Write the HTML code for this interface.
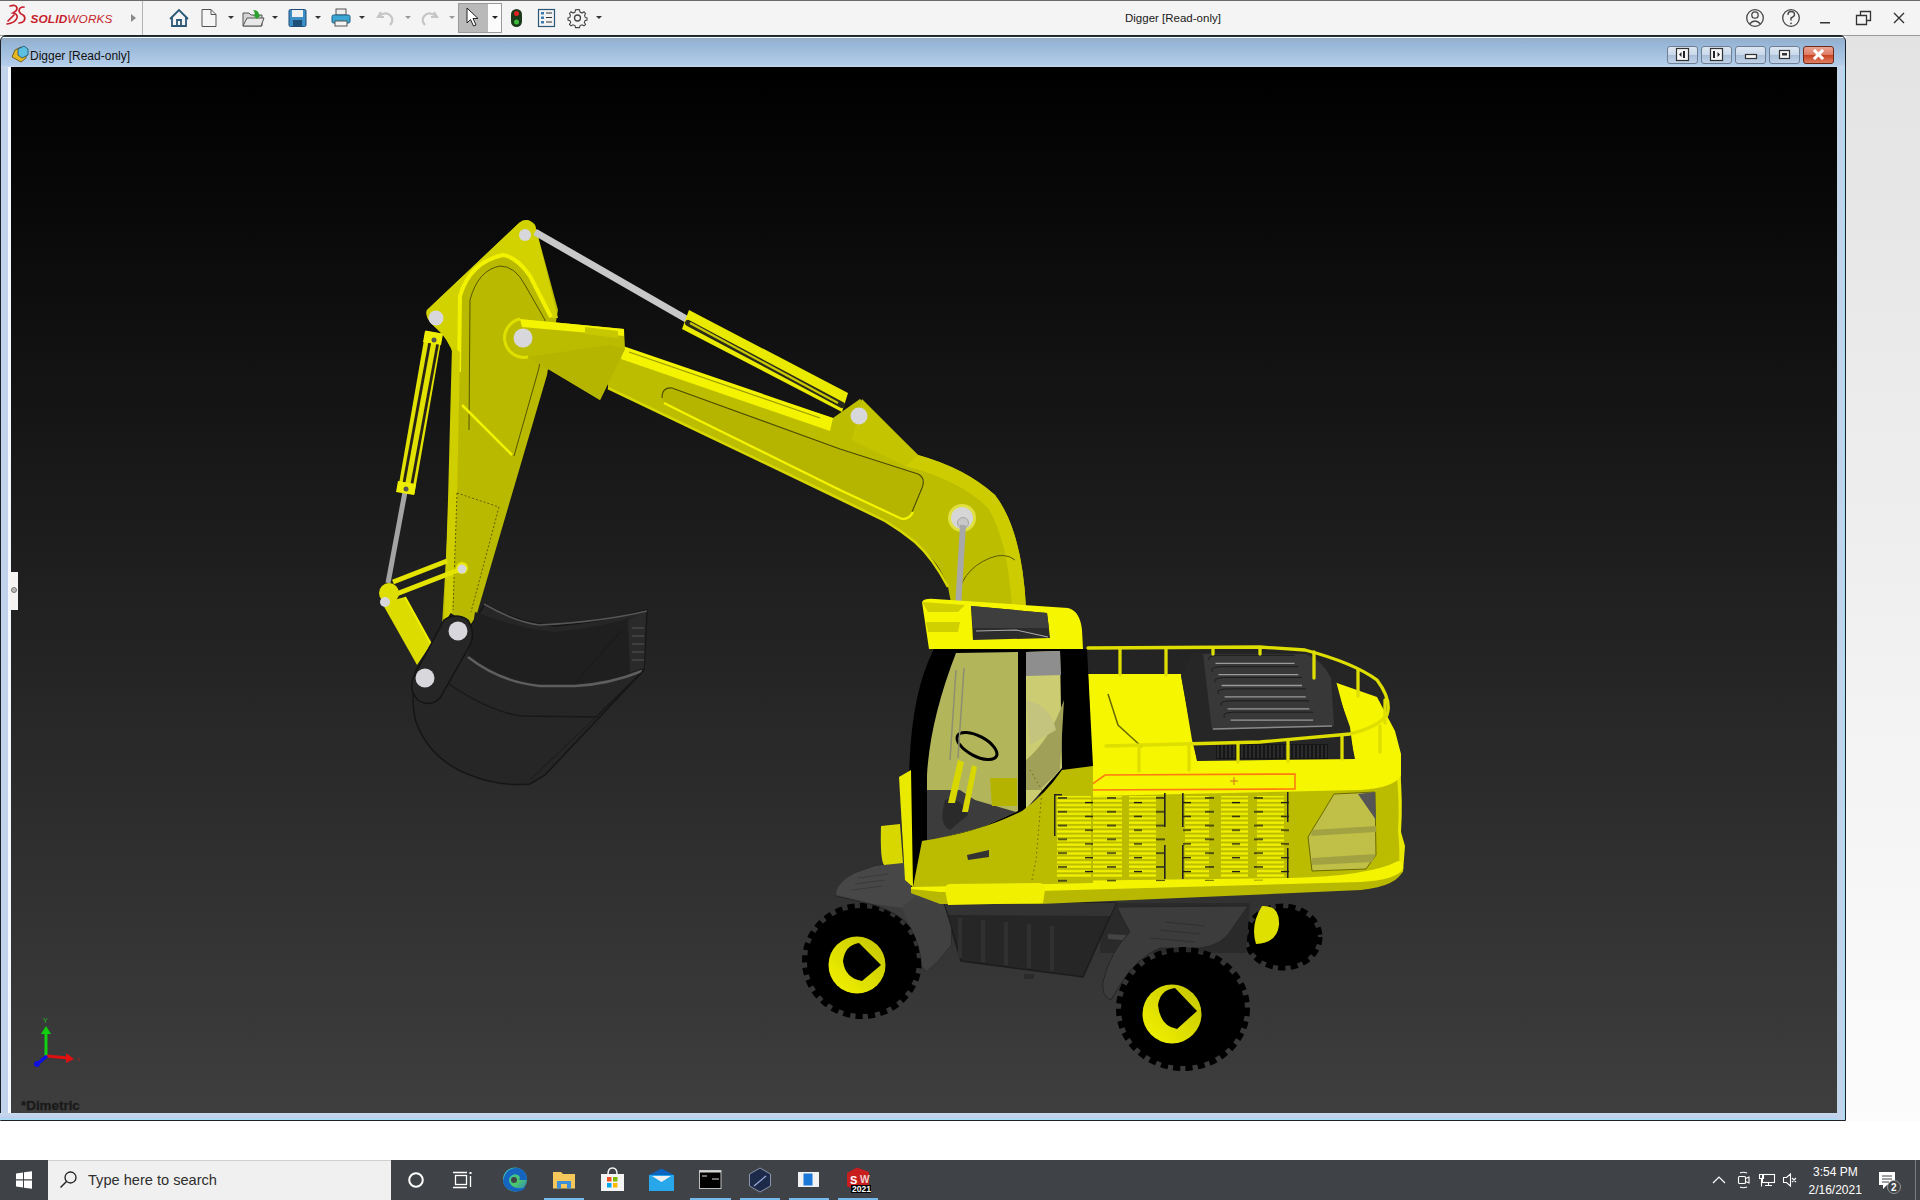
<!DOCTYPE html>
<html><head><meta charset="utf-8">
<style>
*{margin:0;padding:0;box-sizing:border-box}
html,body{width:1920px;height:1200px;overflow:hidden;background:#fff;font-family:"Liberation Sans",sans-serif}
#tb{position:absolute;left:0;top:0;width:1920px;height:36px;background:#f4f4f4;border-bottom:1px solid #9a9a9a}
#right{position:absolute;left:1846px;top:36px;width:74px;height:1085px;background:linear-gradient(#e3e3e3,#fcfcfc)}
#below{position:absolute;left:0;top:1121px;width:1920px;height:39px;background:#fff}
#mdi{position:absolute;left:0;top:35px;width:1846px;height:1086px;background:linear-gradient(#2d3238 0,#2d3238 1px,#eefaff 1px,#eefaff 2px,#97adc6 2px,#96b5d6 7px,#b3cde9 29px,#c8d8ee 31px,#c2d4ec 32px,#c2d4ec);border:1px solid #1d2228;border-radius:6px 6px 0 0}
#vp{position:absolute;left:11px;top:67px;width:1826px;height:1046px;background:linear-gradient(#000 0%,#202020 50%,#3e3e3e 100%)}
#title{position:absolute;left:30px;top:49px;font-size:12px;color:#111}
#task{position:absolute;left:0;top:1160px;width:1920px;height:40px;background:#3f4246}
#search{position:absolute;left:48px;top:1160px;width:343px;height:40px;background:#f0f0f0;border-top:1px solid #d0d0d0}
#search span{position:absolute;left:40px;top:11px;font-size:14.6px;color:#2e2e2e}
#svg{position:absolute;left:0;top:0}
</style></head><body>
<div id="tb"></div>
<svg id="tbsvg" style="position:absolute;left:0;top:0" width="1920" height="36" viewBox="0 0 1920 36">
<rect x="0" y="0" width="1920" height="1" fill="#6a6a6a"/>
<!-- logo 3DS -->
<g fill="none" stroke="#c61f2b" stroke-width="1.7" stroke-linecap="round">
<path d="M10,6 Q16,4 17,8 Q17,11 13,13 Q18,14 17,18 Q15,23 7,24"/>
<path d="M14,15 L8,21"/>
<path d="M24,7 Q19,7 19,11 Q20,14 23,15 Q26,17 24,21 Q22,23 19,23"/>
</g>
<text x="30.5" y="22.5" font-family="Liberation Sans" font-size="11.8" font-style="italic" fill="#c61f2b" letter-spacing="0.15"><tspan font-weight="bold">SOLID</tspan><tspan>WORKS</tspan></text>
<path d="M131,14 L136,18 L131,22 Z" fill="#8a8a8a"/>
<rect x="142" y="1" width="1" height="34" fill="#b4b4b4"/>
<!-- home -->
<g fill="none" stroke="#2b5877" stroke-width="1.8">
<path d="M170,19 L179,10 L188,19"/><path d="M172,17 L172,26 L186,26 L186,17"/><path d="M177,26 L177,20 L181,20 L181,26"/>
</g>
<!-- new doc -->
<path d="M202,9.5 L211,9.5 L216,14.5 L216,26.5 L202,26.5 Z" fill="#f6f6f6" stroke="#555" stroke-width="1"/>
<path d="M211,9.5 L211,14.5 L216,14.5" fill="none" stroke="#555"/>
<path d="M228,16 L234,16 L231,19 Z" fill="#333"/>
<!-- open -->
<path d="M243,13 L249,13 L251,15 L262,15 L262,26 L243,26 Z" fill="#d5d5d5" stroke="#555"/>
<path d="M247,18 L264,18 L261,26 L243,26 Z" fill="#e8e8e8" stroke="#555"/>
<path d="M253,10 Q259,10 259,15 L261,15 L257,19 L253,15 L255,15 Q255,12 253,10 Z" fill="#2da12d"/>
<path d="M272,16 L278,16 L275,19 Z" fill="#333"/>
<!-- save -->
<rect x="289" y="9.5" width="17" height="17" rx="1.5" fill="#3b8ec6" stroke="#1f4f78"/>
<rect x="292" y="10" width="11" height="7" fill="#f0f0f0"/>
<rect x="293" y="20" width="9" height="6" fill="#1f4f78"/>
<path d="M315,16 L321,16 L318,19 Z" fill="#333"/>
<!-- print -->
<rect x="336" y="9" width="10" height="6" fill="#eee" stroke="#555"/>
<rect x="332" y="15" width="18" height="8" rx="1.5" fill="#3aa6d3" stroke="#1f5f86"/>
<rect x="335" y="21" width="12" height="5" fill="#f4f4f4" stroke="#555"/>
<path d="M359,16 L365,16 L362,19 Z" fill="#333"/>
<!-- undo/redo -->
<path d="M381,12 L378,17 L384,17 M379,16 Q388,10 392,18 Q393,22 390,25" fill="none" stroke="#c6c6c6" stroke-width="2.2"/>
<path d="M405,16 L411,16 L408,19 Z" fill="#999"/>
<path d="M434,12 L437,17 L431,17 M436,16 Q427,10 423,18 Q422,22 425,25" fill="none" stroke="#c6c6c6" stroke-width="2.2"/>
<path d="M449,16 L455,16 L452,19 Z" fill="#999"/>
<!-- select -->
<rect x="458.5" y="3.5" width="43" height="29" fill="#fbfbfb" stroke="#9a9a9a"/>
<rect x="459" y="4" width="29" height="28" fill="#b9b9b9"/>
<path d="M467,8 L467,23 L470.5,19.5 L473.5,26 L476,25 L473,18.5 L478,18.5 Z" fill="#fff" stroke="#222" stroke-width="1"/>
<path d="M492,16 L498,16 L495,19 Z" fill="#222"/>
<!-- traffic light -->
<rect x="511" y="9" width="11" height="18" rx="5.5" fill="#1a3a1a"/>
<circle cx="516.5" cy="13.5" r="2.5" fill="#e02020"/>
<circle cx="516.5" cy="22" r="2.5" fill="#3bbd3b"/>
<!-- list -->
<rect x="538.5" y="9.5" width="16" height="17" fill="#f3f3f3" stroke="#2b5877" stroke-width="1.2"/>
<g fill="#3b7bb0"><rect x="541" y="12" width="3" height="2.5"/><rect x="541" y="16.5" width="3" height="2.5"/><rect x="541" y="21" width="3" height="2.5"/></g>
<g stroke="#333" stroke-width="1"><path d="M546,13 L552,13 M546,17.5 L552,17.5 M546,22 L552,22"/></g>
<!-- gear -->
<circle cx="577.5" cy="18" r="3" fill="none" stroke="#444" stroke-width="1.3"/>
<path d="M577.5,9.5 L579.5,9.8 L580,12 L582,13 L584,11.8 L585.5,13.5 L584.5,15.6 L585.3,17.4 L587,18 L587,20 L585,20.6 L584.3,22.4 L585.5,24.3 L584,25.8 L582,24.8 L580,25.6 L579.5,27.6 L575.5,27.6 L575,25.6 L573,24.8 L571,25.8 L569.5,24.3 L570.7,22.4 L570,20.6 L568,20 L568,18 L569.8,17.4 L570.5,15.6 L569.5,13.5 L571,11.8 L573,13 L575,12 L575.5,9.8 Z" fill="none" stroke="#444" stroke-width="1.1"/>
<path d="M596,16 L602,16 L599,19 Z" fill="#333"/>
<!-- right icons -->
<circle cx="1755" cy="18" r="8.3" fill="none" stroke="#444" stroke-width="1.3"/>
<circle cx="1755" cy="15" r="3.2" fill="none" stroke="#444" stroke-width="1.3"/>
<path d="M1749.5,24 Q1755,18 1760.5,24" fill="none" stroke="#444" stroke-width="1.3"/>
<circle cx="1791" cy="18" r="8.3" fill="none" stroke="#444" stroke-width="1.3"/>
<path d="M1788,15 Q1788,11.5 1791,11.5 Q1794.5,11.5 1794.5,14.5 Q1794.5,16.5 1791,18 L1791,20.5" fill="none" stroke="#444" stroke-width="1.4"/>
<circle cx="1791" cy="23.3" r="0.9" fill="#444"/>
<rect x="1820" y="22" width="10" height="1.5" fill="#333"/>
<path d="M1856.5,15.5 h10 v9 h-10 Z M1860.5,15.5 v-4 h10 v9 h-4" fill="none" stroke="#333" stroke-width="1.3"/>
<path d="M1894,13 L1904,23 M1904,13 L1894,23" stroke="#333" stroke-width="1.4"/>
</svg>
<div style="position:absolute;left:1125px;top:12px;font-size:11.5px;color:#1a1a1a;letter-spacing:0">Digger [Read-only]</div>

<div id="right"></div>
<div id="below"></div>
<div id="mdi"></div>
<div style="position:absolute;left:8px;top:67px;width:3px;height:1046px;background:#f4f8fc"></div><div style="position:absolute;left:0;top:1113px;width:1845px;height:7px;background:linear-gradient(#c6dcec,#c2cdee 60%,#9ee2f6)"></div><div style="position:absolute;left:1837px;top:67px;width:8px;height:1053px;background:linear-gradient(90deg,#c2d4ec 70%,#9ee2f6)"></div><div id="vp"></div>

<svg style="position:absolute;left:0;top:36px" width="1846" height="32" viewBox="0 36 1846 32">
<!-- doc icon -->
<path d="M12,57 L15,50 L21,47 L26,50 L26,58 L21,62 Z" fill="#e8b820" stroke="#5a4a10" stroke-width="0.8"/>
<path d="M18,49 L24,46 L28,49 L28,55 L22,58 L18,55 Z" fill="#5cc0e0" stroke="#1a4a6a" stroke-width="0.8"/>
<defs><linearGradient id="bg1" x1="0" y1="0" x2="0" y2="1"><stop offset="0" stop-color="#dfe8f3"/><stop offset="0.5" stop-color="#c9d8ea"/><stop offset="0.5" stop-color="#a9bfd9"/><stop offset="1" stop-color="#c2d3ea"/></linearGradient>
<linearGradient id="bg2" x1="0" y1="0" x2="0" y2="1"><stop offset="0" stop-color="#eba898"/><stop offset="0.5" stop-color="#dd7a62"/><stop offset="0.5" stop-color="#c8401e"/><stop offset="1" stop-color="#e0846a"/></linearGradient></defs>
<rect x="1667.5" y="46.5" width="30" height="17" rx="2.5" fill="url(#bg1)" stroke="#6e7f94"/>
<rect x="1701.5" y="46.5" width="30" height="17" rx="2.5" fill="url(#bg1)" stroke="#6e7f94"/>
<rect x="1735.5" y="46.5" width="30" height="17" rx="2.5" fill="url(#bg1)" stroke="#6e7f94"/>
<rect x="1769.5" y="46.5" width="30" height="17" rx="2.5" fill="url(#bg1)" stroke="#6e7f94"/>
<rect x="1803.5" y="46.5" width="30" height="17" rx="2.5" fill="url(#bg2)" stroke="#6b2a1a"/>
<rect x="1676.5" y="48.5" width="12" height="12" fill="#f4f6f8" stroke="#333" stroke-width="1.2"/>
<path d="M1683,51 v7 h2 v-7 Z M1679,54.5 L1681.5,52 L1681.5,57 Z" fill="#222"/>
<rect x="1710.5" y="48.5" width="12" height="12" fill="#f4f6f8" stroke="#333" stroke-width="1.2"/>
<path d="M1713,51 v7 h2 v-7 Z M1720,54.5 L1717.5,52 L1717.5,57 Z" fill="#222"/>
<rect x="1745.5" y="54.5" width="11" height="4" fill="#f4f6f8" stroke="#333" stroke-width="1.2"/>
<rect x="1779.5" y="50.5" width="10" height="8" fill="#f4f6f8" stroke="#333" stroke-width="1.2"/>
<rect x="1782" y="53" width="5" height="2.5" fill="#333"/>
<path d="M1814,50 L1823,59 M1823,50 L1814,59" stroke="#fff" stroke-width="3"/>
<path d="M1814,50 L1823,59 M1823,50 L1814,59" stroke="#fff" stroke-width="2.2"/>
</svg>
<div style="position:absolute;left:10px;top:572px;width:8px;height:38px;background:#f6f4f2"></div>
<div style="position:absolute;left:11px;top:587px;width:6px;height:6px;border-radius:50%;background:#b8b8b8;border:1px solid #777"></div>
<div id="title">Digger [Read-only]</div>
<div id="task"></div>
<div id="search"><span>Type here to search</span></div>
<svg style="position:absolute;left:0;top:1160px" width="1920" height="40" viewBox="0 1160 1920 40">
<!-- windows logo -->
<g fill="#fff">
<path d="M16,1173.5 L23,1172.5 L23,1179.3 L16,1179.3 Z"/>
<path d="M24,1172.3 L32,1171.2 L32,1179.3 L24,1179.3 Z"/>
<path d="M16,1180.5 L23,1180.5 L23,1187.5 L16,1186.5 Z"/>
<path d="M24,1180.5 L32,1180.5 L32,1188.8 L24,1187.7 Z"/>
</g>
<!-- magnifier -->
<circle cx="70.5" cy="1177.5" r="5.5" fill="none" stroke="#222" stroke-width="1.3"/>
<path d="M66.5,1181.5 L60.5,1187.5" stroke="#222" stroke-width="1.4"/>
<!-- cortana -->
<circle cx="416" cy="1180" r="6.8" fill="none" stroke="#fff" stroke-width="2"/>
<!-- task view -->
<g fill="none" stroke="#fff" stroke-width="1.3">
<rect x="455.5" y="1175.5" width="11" height="9"/>
<path d="M453,1172.5 h14 M453,1187.5 h14 M470.5,1176 v11"/>
</g>
<rect x="469.5" y="1172" width="2" height="2" fill="#fff"/>
<!-- edge -->
<defs>
<linearGradient id="eg" x1="0" y1="0" x2="1" y2="1"><stop offset="0" stop-color="#31b2d8"/><stop offset="0.6" stop-color="#4cc96a"/><stop offset="1" stop-color="#2a7bd2"/></linearGradient>
</defs>
<circle cx="515" cy="1179.5" r="12" fill="url(#eg)"/>
<path d="M503,1181 Q504,1190 515,1191.5 Q522,1192 526,1187 Q518,1190 512,1186 Q507,1182 510,1177 Q513,1173 518,1175 Q521,1177 519,1180 L527,1180 Q527,1170 518,1168 Q506,1167 503,1181 Z" fill="#1565c0"/>
<circle cx="514" cy="1180" r="3" fill="#3f4246"/>
<!-- explorer -->
<path d="M553,1172 L561,1172 L563,1174 L575,1174 L575,1188.5 L553,1188.5 Z" fill="#f6c75a"/>
<path d="M557,1181 L571,1181 L571,1188.5 L567,1188.5 L567,1184 L561,1184 L561,1188.5 L557,1188.5 Z" fill="#3e8ed8"/>
<rect x="544" y="1198" width="40" height="2" fill="#76b9ed"/>
<!-- store -->
<rect x="601" y="1174" width="23" height="17" fill="#f4f4f4"/>
<path d="M608,1174 Q608,1168 612.5,1168 Q617,1168 617,1174" fill="none" stroke="#f4f4f4" stroke-width="1.5"/>
<rect x="607" y="1177" width="4.5" height="4.5" fill="#f25022"/><rect x="613" y="1177" width="4.5" height="4.5" fill="#7fba00"/>
<rect x="607" y="1183" width="4.5" height="4.5" fill="#00a4ef"/><rect x="613" y="1183" width="4.5" height="4.5" fill="#ffb900"/>
<!-- mail -->
<path d="M649,1175 L661.5,1168.5 L674,1175 L674,1191 L649,1191 Z" fill="#0c64c0"/>
<path d="M649,1175 L674,1175 L674,1191 L649,1191 Z" fill="#28a8ea"/>
<path d="M652,1176 L671,1176 L661.5,1182 Z" fill="#f0f0f0"/>
<!-- cmd -->
<rect x="699.5" y="1170.5" width="21.5" height="18" fill="#000" stroke="#bdbdbd" stroke-width="1"/>
<rect x="699.5" y="1170.5" width="21.5" height="2" fill="#d8d8d8"/>
<path d="M702,1176 h5 M712,1179 h7" stroke="#ddd" stroke-width="1.2"/>
<rect x="690" y="1198" width="41" height="2" fill="#76b9ed"/>
<!-- hex -->
<path d="M760,1168 L770.5,1174 L770.5,1186 L760,1192 L749.5,1186 L749.5,1174 Z" fill="#1e2a4a" stroke="#8a95a8" stroke-width="1"/>
<path d="M754,1186 L766,1176" stroke="#9fb0e0" stroke-width="1.2"/>
<rect x="740" y="1198" width="40" height="2" fill="#76b9ed"/>
<!-- window app -->
<rect x="798" y="1172" width="21" height="15" fill="#f2f2f2"/>
<rect x="803.5" y="1173.5" width="9" height="12" fill="#1a78d8"/>
<rect x="789" y="1198" width="40" height="2" fill="#76b9ed"/>
<!-- solidworks -->
<path d="M847,1173 L857,1167.5 L869,1172 L869,1188 L858,1192 L847,1186 Z" fill="#c81e1e"/>
<text x="850" y="1184" font-family="Liberation Sans" font-size="11" font-weight="bold" fill="#fff">S</text>
<text x="860" y="1183" font-family="Liberation Sans" font-size="10" font-weight="bold" fill="#f0d0d0">W</text>
<rect x="851" y="1185" width="20" height="8" fill="#000"/>
<text x="852" y="1192" font-family="Liberation Sans" font-size="8.5" font-weight="bold" fill="#fff">2021</text>
<rect x="838" y="1198" width="40" height="2" fill="#76b9ed"/>
<!-- tray -->
<path d="M1713,1183 L1719,1177 L1725,1183" fill="none" stroke="#fff" stroke-width="1.2"/>
<g fill="none" stroke="#fff" stroke-width="1.1">
<rect x="1738.5" y="1176.5" width="7" height="7" rx="1"/><path d="M1745.5,1178.5 L1749,1177 L1749,1183 L1745.5,1181.5"/>
<path d="M1740,1173 Q1743,1171.5 1747,1173 M1740,1187 Q1743,1188.5 1747,1187"/>
<rect x="1762.5" y="1174.5" width="12" height="8"/><path d="M1768.5,1182.5 v3 M1765,1185.5 h7 M1759.5,1174.5 h4 v4 h-4 z M1761.5,1178.5 v8"/>
<path d="M1783.5,1177.5 h3 l4,-3.5 v12 l-4,-3.5 h-3 Z M1792,1178 l4,4 M1796,1178 l-4,4"/>
</g>
<text x="1813" y="1175.5" font-family="Liberation Sans" font-size="12" fill="#fff">3:54 PM</text>
<text x="1808.5" y="1193.5" font-family="Liberation Sans" font-size="12" fill="#fff">2/16/2021</text>
<path d="M1879,1172 h16 v13 h-8 l-4,4 v-4 h-4 Z" fill="#fff"/>
<path d="M1882,1176 h10 M1882,1179 h10 M1882,1182 h7" stroke="#3f4246" stroke-width="1"/>
<circle cx="1894" cy="1187" r="6.5" fill="#3f4246" stroke="#aaa" stroke-width="0.8"/>
<text x="1891" y="1191" font-family="Liberation Sans" font-size="10" font-weight="bold" fill="#fff">2</text>
<rect x="1915" y="1160" width="1" height="40" fill="#7a7d82"/>
</svg>

<svg id="svg" width="1920" height="1200" viewBox="0 0 1920 1200" style="position:absolute;left:0;top:0">
<defs>
<pattern id="vent" width="60" height="4.4" patternUnits="userSpaceOnUse" patternTransform="translate(1056,794)">
<rect x="0" y="1.2" width="60" height="2.2" fill="#f2f200"/>
</pattern>
<pattern id="ventd" width="49" height="13.8" patternUnits="userSpaceOnUse" patternTransform="translate(1058,797)">
<rect x="0" y="0.3" width="9" height="1.3" fill="#151515"/>
<rect x="27" y="4.9" width="8" height="1.3" fill="#151515"/>
</pattern>
<linearGradient id="rimg" x1="0" y1="1" x2="1" y2="0"><stop offset="0" stop-color="#f4f400"/><stop offset="1" stop-color="#c4c400"/></linearGradient>
</defs>
<!-- ===== back wheel ===== -->
<ellipse cx="1283" cy="937" rx="35" ry="29" fill="#000" stroke="#000" stroke-width="9" stroke-dasharray="7 5"/>
<path d="M1262,906 Q1280,905 1279,925 Q1277,943 1256,944 Q1250,925 1262,906 Z" fill="#e0e000"/>
<!-- ===== chassis ===== -->
<path d="M1100,903 L1250,903 L1246,953 L1100,953 Z" fill="#2a2a2a"/>
<path d="M1108,934 L1138,936 L1137,941 L1108,939 Z" fill="#444"/>
<path d="M944,903 L1116,903 L1083,977 L961,961 Z" fill="#262626" stroke="#1c1c1c" stroke-width="1.5"/>
<path d="M944,903 L1116,903 L1110,916 L949,915 Z" fill="#333"/>
<g fill="#303030"><rect x="958" y="918" width="4" height="40"/><rect x="981" y="920" width="4" height="42"/><rect x="1004" y="922" width="4" height="43"/><rect x="1027" y="924" width="4" height="44"/><rect x="1050" y="926" width="4" height="45"/></g>
<rect x="1024" y="974" width="10" height="5" fill="#2a2a2a"/>
<path d="M1117,907 L1248,906 L1232,929 Q1222,946 1200,948 L1160,948 Q1136,958 1120,985 L1111,1000 Q1101,996 1103,982 Q1110,952 1130,932 Q1122,918 1117,907 Z" fill="#3c3c3c" stroke="#262626" stroke-width="1"/>
<path d="M1160,930 L1200,934 M1150,938 L1195,942 M1165,922 L1205,926" stroke="#303030" stroke-width="1"/>
<!-- ===== front right wheel ===== -->
<ellipse cx="1183" cy="1009" rx="62" ry="57" fill="#000" stroke="#000" stroke-width="10" stroke-dasharray="7 5"/>
<ellipse cx="1172" cy="1014" rx="29.5" ry="29.5" fill="url(#rimg)"/>
<path d="M1158,1005 Q1160,990 1175,988 L1197,1011 L1177,1029 Q1160,1026 1158,1005 Z" fill="#000"/>
<!-- ===== front left wheel ===== -->
<ellipse cx="862" cy="961" rx="55" ry="53" fill="#000" stroke="#000" stroke-width="10" stroke-dasharray="7 5"/>
<ellipse cx="857" cy="965" rx="28.5" ry="28.5" fill="url(#rimg)"/>
<path d="M843,961 Q845,945 859,943 L881,965 L862,981 Q845,978 843,961 Z" fill="#000"/>
<!-- left fender -->
<path d="M836,893 Q838,882 855,873 L875,866 L904,862 L944,905 L951,928 L951,945 L937,962 L927,971 L922,967 Q921,945 911,928 Q900,913 874,905 L836,896 Z" fill="#3b3b3b" stroke="#262626" stroke-width="1"/>
<path d="M836,892 Q838,882 855,873 L875,866 L904,862 L928,886 L902,908 L874,904 L836,895 Z" fill="#474747"/>
<path d="M858,878 L888,874 M855,884 L885,880 M852,890 L882,886" stroke="#3a3a3a" stroke-width="1"/>
<path d="M928,886 L944,905 L951,928 L951,945 L937,962 L927,971 L922,967 Q921,945 911,928 L902,908 Z" fill="#414141"/>
<!-- ===== body ===== -->
<path d="M1090,780 L1398,764 L1401,775 L1400,832 L1404,846 L1402,873 Q1385,888 1361,889 L1040,903 L940,903 L911,893 L911,880 L1093,880 Z" fill="#bbbb00"/>
<path d="M1396,770 L1400,770 Q1403,800 1401,832 L1405,846 L1403,872 L1399,874 Q1400,846 1398,832 Q1400,800 1396,770 Z" fill="#e8e800"/>
<!-- bottom band -->
<path d="M911,884 L1290,879 Q1370,877 1398,862 Q1404,862 1403,870 Q1398,886 1361,890 L1040,904 L940,904 L911,893 Z" fill="#b8b800"/>
<path d="M911,883 L1290,878 Q1370,876 1398,861 Q1404,861 1403,869 Q1396,880 1361,882 L1040,891 L940,892 L911,889 Z" fill="#f4f400"/>
<!-- right window -->
<path d="M1334,794 L1375,792 L1376,855 L1366,869 L1312,871 L1308,837 Z" fill="#c0c048" stroke="#6a6a00" stroke-width="1"/>
<path d="M1312,830 L1376,826 L1376,832 L1311,836 Z" fill="#a2a242"/>
<path d="M1312,858 L1376,854 L1372,862 L1312,865 Z" fill="#a2a242"/>
<path d="M1358,794 L1375,792 L1376,820 Z" fill="#555"/>
<!-- deck -->
<path d="M1088,674 L1181,674 L1192,740 L1197,760 L1354,758 L1350,727 L1334,682 L1377,697 L1395,731 L1401,754 L1401,775 Q1395,782 1370,784 L1093,795 Z" fill="#f6f600"/>
<path d="M1093,778 L1290,772 Q1370,770 1398,760 L1401,775 Q1395,788 1360,790 L1093,796 Z" fill="#f6f600"/>
<path d="M1108,694 L1118,725 L1142,747" fill="none" stroke="#6a6a00" stroke-width="1.5"/>
<!-- orange selection -->
<path d="M1084,790 L1105,775 L1295,774 L1295,789 Z" fill="none" stroke="#ff7a10" stroke-width="1.6"/>
<path d="M1230,781 h8 M1234,777 v8" stroke="#d07020" stroke-width="1"/>
<!-- engine hood -->
<path d="M1181,676 L1192,653 L1309,653 L1336,681 L1349,730 L1355,759 L1197,761 Z" fill="#262626"/>
<path d="M1203,654 L1306,654 Q1322,660 1331,678 L1334,726 L1212,730 Z" fill="#383838"/>
<path d="M1209.5,660.3 Q1205.5,656.3 1217.5,655.3 L1294.6,655.3" fill="none" stroke="#1c1c1c" stroke-width="1"/>
<path d="M1215.5,663.3 L1294.6,663.3" stroke="#9a9a9a" stroke-width="1.3"/>
<path d="M1212.5,671.7 Q1208.5,667.7 1220.5,666.7 L1298.3,666.7" fill="none" stroke="#1c1c1c" stroke-width="1"/>
<path d="M1218.5,674.7 L1298.3,674.7" stroke="#9a9a9a" stroke-width="1.3"/>
<path d="M1215.6,682.5 Q1211.6,678.5 1223.6,677.5 L1302.0,677.5" fill="none" stroke="#1c1c1c" stroke-width="1"/>
<path d="M1221.6,685.5 L1302.0,685.5" stroke="#9a9a9a" stroke-width="1.3"/>
<path d="M1218.6,693.9 Q1214.6,689.9 1226.6,688.9 L1305.7,688.9" fill="none" stroke="#1c1c1c" stroke-width="1"/>
<path d="M1224.6,696.9 L1305.7,696.9" stroke="#9a9a9a" stroke-width="1.3"/>
<path d="M1221.7,705.8 Q1217.7,701.8 1229.7,700.8 L1309.4,700.8" fill="none" stroke="#1c1c1c" stroke-width="1"/>
<path d="M1227.7,708.8 L1309.4,708.8" stroke="#9a9a9a" stroke-width="1.3"/>
<path d="M1224.7,717.2 Q1220.7,713.2 1232.7,712.2 L1313.1,712.2" fill="none" stroke="#1c1c1c" stroke-width="1"/>
<path d="M1230.7,720.2 L1313.1,720.2" stroke="#9a9a9a" stroke-width="1.3"/>
<path d="M1213,729 L1332,726" stroke="#8a8a8a" stroke-width="1.6"/>
<rect x="1216" y="744" width="112" height="15" fill="#161616"/>
<path d="M1218,745 v13 M1222,745 v13 M1226,745 v13 M1230,745 v13 M1234,745 v13 M1238,745 v13 M1242,745 v13 M1246,745 v13 M1250,745 v13 M1254,745 v13 M1258,745 v13 M1262,745 v13 M1266,745 v13 M1270,745 v13 M1274,745 v13 M1278,745 v13 M1282,745 v13 M1286,745 v13 M1290,745 v13 M1294,745 v13 M1298,745 v13 M1302,745 v13 M1306,745 v13 M1310,745 v13 M1314,745 v13 M1318,745 v13 M1322,745 v13 M1326,745 v13" stroke="#353535" stroke-width="1.4"/>
<!-- railings -->
<g fill="none" stroke="#dede00" stroke-width="3.3" stroke-linecap="round">
<path d="M1088,648 L1260,647 L1305,650 Q1354,663 1377,680 Q1392,700 1387,715 Q1378,727 1350,734 L1260,742 L1106,746"/>
<path d="M1120,648 v27 M1166,648 v27 M1213,648 v6 M1260,648 v6 M1314,652 v26 M1358,670 v26 M1385,700 v23 M1139,746 v25 M1189,745 v25 M1238,744 v18 M1288,741 v20 M1342,735 v24 M1380,726 v26"/>
</g>
<!-- ===== boom ===== -->
<path d="M608,345 L833,418 L860,399 L918,455 Q965,468 995,495 Q1022,530 1026,608 L952,608 L948,587 Q942,570 933,560 Q922,548 915,542 Q900,530 885,521 L840,499 L608,388 Z" fill="#bdbd00"/>
<path d="M608,388 L840,499 L885,521 Q900,530 915,542 Q933,558 948,587" fill="none" stroke="#d8d800" stroke-width="2.5"/>
<path d="M623,346 L833,418 L830,431 L621,359 Z" fill="#f4f400"/>
<path d="M629,352 L820,418" stroke="#9a9a00" stroke-width="1.2"/>
<path d="M918,455 Q965,468 995,495 Q1022,530 1026,608 L1012,608 Q1008,540 988,508 Q960,480 905,466 Z" fill="#cccc00"/>
<path d="M862,399 L918,455 L905,466 L852,440 Z" fill="#c4c400"/>
<path d="M662,398 Q662,387 672,388 L840,449 L918,474 Q926,478 922,488 L912,512 Q908,519 900,517 L840,489 L690,415 L668,404 Q662,402 662,398 Z" fill="#b5b500"/>
<path d="M662,398 Q662,387 672,388 L840,449 L918,474 Q926,478 922,488 L912,512" fill="none" stroke="#4a4a00" stroke-width="1.1"/>
<path d="M664,403 L690,416 L840,490 L902,519 Q910,519 913,512" fill="none" stroke="#f4f400" stroke-width="2.2"/>
<path d="M956,604 Q960,570 990,558 Q1005,552 1015,560" fill="none" stroke="#5a5a00" stroke-width="1"/>
<!-- ===== stick ===== -->
<path d="M427,310 L519,223 Q527,216 535,225 L558,310 L547,375 L473,627 L442,625 L447,540 L453,400 L454,356 Q448,338 436,328 Q424,318 427,310 Z" fill="#b9b900"/>
<path d="M427,310 L519,223 Q527,216 535,225 L558,318 L551,318 L530,276 Q517,256 503,255 Q470,262 460,296 L459,370 L454,356 Q448,338 436,328 Q424,318 427,310 Z" fill="#d2d200"/>
<path d="M459,372 L460,296 Q470,262 503,255 Q517,257 530,276 L551,317" fill="none" stroke="#f2f200" stroke-width="4"/>
<path d="M469,430 L470,300 Q478,270 500,266 Q515,266 525,285 L545,320 L539,368 L514,456" fill="none" stroke="#4a4a00" stroke-width="0.9"/>
<path d="M462,405 L512,455" stroke="#f2f200" stroke-width="2.5"/>
<path d="M452,346 L460,352 L457,500 L452,620 L444,622 L448,500 Z" fill="#cfcf00"/>
<path d="M457,493 L499,507 L471,612" fill="none" stroke="#4a4a00" stroke-width="0.8" stroke-dasharray="2 2"/>
<path d="M457,493 L453,610" fill="none" stroke="#4a4a00" stroke-width="0.8" stroke-dasharray="2 2"/>
<!-- boom rod + cylinder -->
<line x1="535" y1="232" x2="688" y2="320" stroke="#c8c8c8" stroke-width="7"/>
<path d="M689,310 L848,393 L842,412 L682,329 Z" fill="#eaea00"/>
<line x1="688" y1="323" x2="842" y2="405" stroke="#2a2a1a" stroke-width="6" stroke-linecap="round"/>
<line x1="690" y1="323" x2="838" y2="403" stroke="#c8c800" stroke-width="2.4"/>
<!-- boom clevis -->
<path d="M520,319 L624,329 L625,349 L600,400 L528,357 A19,19 0 0 1 520,319 Z" fill="#bbbb00"/>
<path d="M520,319 L624,329 L624,336 L522,327 Z" fill="#f4f400"/>
<path d="M528,357 A19,19 0 0 1 520,319" fill="none" stroke="#e0e000" stroke-width="3"/>
<path d="M528,357 L600,400 L625,349 L610,345 Z" fill="#b5b500"/>
<path d="M585,327 L618,331 L618,338 L585,334 Z" fill="#c8c800"/>
<!-- pivots -->
<circle cx="525" cy="235" r="6" fill="#d8d8dc"/>
<circle cx="436" cy="318" r="7.5" fill="#d8d8dc"/>
<circle cx="523" cy="338" r="9.5" fill="#d8d8dc"/>
<circle cx="859" cy="416" r="8.5" fill="#d8d8dc"/>
<circle cx="962" cy="518" r="14" fill="#e0e040"/>
<circle cx="962" cy="518" r="11" fill="#d6d6d6"/>
<circle cx="963" cy="523" r="5.5" fill="#c8c8c8" stroke="#999" stroke-width="0.8"/>
<line x1="963" y1="525" x2="958" y2="608" stroke="#a8a8a8" stroke-width="6"/>
<!-- ===== bucket cylinder ===== -->
<line x1="405" y1="492" x2="388" y2="583" stroke="#a4a4a4" stroke-width="5"/>
<line x1="434" y1="332" x2="406" y2="493" stroke="#e2e200" stroke-width="17"/>
<line x1="430" y1="341" x2="403" y2="488" stroke="#2a2418" stroke-width="2.8"/>
<line x1="438" y1="342" x2="411" y2="489" stroke="#2a2418" stroke-width="2.8"/>
<path d="M425,331 L443,334 L441,345 L423,342 Z" fill="#eeee00"/>
<path d="M398,481 L416,484 L414,495 L396,492 Z" fill="#eeee00"/>
<circle cx="434" cy="340" r="2.5" fill="#555"/>
<circle cx="406" cy="489" r="2.5" fill="#555"/>
<!-- links -->
<path d="M382,603 L405,597 L431,644 L417,665 Z" fill="#dcdc00"/>
<path d="M405,597 L431,644" stroke="#f0f000" stroke-width="2"/>
<line x1="393" y1="582" x2="447" y2="561" stroke="#e4e400" stroke-width="5"/>
<line x1="386" y1="598" x2="461" y2="569" stroke="#e4e400" stroke-width="5"/>
<circle cx="389" cy="593" r="10" fill="#dede00"/>
<circle cx="462" cy="568" r="6" fill="#e8e800"/>
<circle cx="462" cy="569" r="4.5" fill="#d8d8dc"/>
<circle cx="385" cy="602" r="5" fill="#d8d8dc"/>
<!-- ===== bucket ===== -->
<path d="M451,614 L416,670 Q410,700 416,722 Q430,760 470,775 Q500,787 530,784 L545,775 L644,670 L647,610 Q600,622 555,626 Q515,622 485,604 L470,627 Z" fill="#262626" stroke="#161616" stroke-width="1.5"/>
<path d="M475,612 Q515,628 555,632 Q600,628 645,614 L643,670 Q610,684 575,686 L540,686 Q500,682 468,657 Z" fill="#1f1f1f"/>
<path d="M628,620 L646,612 L644,668 L630,672 Z" fill="#2a2a2a"/>
<path d="M632,628 h12 M632,636 h12 M632,644 h12 M632,652 h12 M632,660 h12" stroke="#555" stroke-width="1"/>
<path d="M468,657 Q500,682 540,686 L575,686 Q610,684 642,671" fill="none" stroke="#5e5e5e" stroke-width="2.5"/>
<path d="M484,604 Q515,622 540,625 Q600,622 647,611" fill="none" stroke="#575757" stroke-width="1.6"/>
<path d="M449,684 Q490,712 522,716 L596,717 L643,671" fill="none" stroke="#181818" stroke-width="1.3"/>
<path d="M596,717 L531,779" fill="none" stroke="#1a1a1a" stroke-width="1"/>
<path d="M622,630 L575,683" stroke="#181818" stroke-width="1"/>
<path d="M444,620 Q456,612 468,620 Q476,632 470,645 L440,698 Q430,708 418,700 Q408,690 414,676 Z" fill="#262626" stroke="#141414" stroke-width="1.5"/>
<circle cx="458" cy="631" r="9.5" fill="#d8d8dc"/>
<circle cx="425" cy="678" r="9.5" fill="#d8d8dc"/>
<!-- ===== cab ===== -->
<path d="M922,602 Q924,598 935,599 L1068,608 Q1080,611 1082,630 L1083,649 L929,649 Z" fill="#f6f600"/>
<path d="M922,602 L965,605 L958,612 L928,612 Z M926,622 L960,622 L958,632 L928,632 Z" fill="#d0d000"/>
<path d="M971,606 L1047,613 L1050,638 L973,640 Z" fill="#2c2c2c"/>
<path d="M971,606 L1047,613 L1049,628 L973,628 Z" fill="#3e3e3e"/>
<path d="M976,631 L1016,630 L1048,637" fill="none" stroke="#aaa" stroke-width="1.2"/>
<path d="M934,649 L1087,649 L1093,766 L1030,800 L1025,810 L980,830 L922,841 L924,885 L911,887 L909,780 Q910,695 934,649 Z" fill="#000"/>
<path d="M956,653 L1018,652 L1018,811 L980,828 L927,841 L927,775 Q930,720 956,653 Z" fill="#b3b55a"/>
<path d="M927,790 L960,790 L975,800 L1016,812 L980,828 L927,841 Z" fill="#3c3c3c"/>
<path d="M945,800 Q960,795 968,815 L950,830 Q938,825 945,800 Z" fill="#2a2a2a"/>
<path d="M990,778 L1017,778 L1017,806 L992,806 Z" fill="#b4b400"/>
<path d="M948,803 L958,760 L964,762 L955,803 Z" fill="#d8d800"/>
<path d="M962,812 L972,765 L977,767 L968,812 Z" fill="#d8d800"/>
<ellipse cx="977" cy="746" rx="22" ry="10" transform="rotate(28 977 746)" fill="none" stroke="#000" stroke-width="3"/>
<path d="M956,670 L950,760 M964,668 L958,758" stroke="#8e8e70" stroke-width="1.5"/>
<path d="M1026,652 L1060,651 L1062,768 L1026,809 Z" fill="#cccc72"/>
<path d="M1026,652 L1060,651 L1061,675 L1026,676 Z" fill="#8e8e8e"/>
<path d="M1064,700 L1060,770 L1040,790 L1026,790 L1026,760 Q1050,740 1064,700 Z" fill="#a0a058"/>
<path d="M1026,700 Q1050,705 1056,730 L1030,745 Z" fill="#c4c47e"/>
<path d="M922,841 Q980,832 1022,811 Q1045,795 1062,770 L1093,766 L1093,883 L913,887 Z" fill="#bbbb00"/>
<path d="M967,855 L989,850 L989,857 L968,860 Z" fill="#333"/>
<path d="M899,777 L911,770 L913,887 L905,880 Z" fill="#eaea00"/>
<path d="M881,826 L900,824 L903,863 L884,865 Q880,860 881,826 Z" fill="#d8d800"/>
<path d="M945,890 Q944,885 950,884 L1040,883 Q1046,884 1045,890 L1043,903 L948,905 Z" fill="#f0f000"/>
<!-- vent -->
<path d="M1030,770 L1042,790 L1036,860 L1032,880" fill="none" stroke="#6a6a00" stroke-width="1" stroke-dasharray="1.5 3"/>
<rect x="1057" y="796" width="34" height="82" fill="url(#vent)"/>
<rect x="1093" y="796" width="29" height="82" fill="url(#vent)"/>
<rect x="1129" y="796" width="27" height="82" fill="url(#vent)"/>
<rect x="1185" y="796" width="24" height="82" fill="url(#vent)"/>
<rect x="1221" y="796" width="27" height="82" fill="url(#vent)"/>
<rect x="1257" y="796" width="27" height="82" fill="url(#vent)"/>
<path d="M1056,794 L1290,792 L1290,880 L1058,882 Z" fill="url(#ventd)"/>
<rect x="1164" y="793" width="1.6" height="34" fill="#222"/>
<rect x="1164" y="845" width="1.6" height="34" fill="#222"/>
<rect x="1182" y="793" width="1.6" height="34" fill="#222"/>
<rect x="1182" y="845" width="1.6" height="34" fill="#222"/>
<rect x="1054" y="794" width="1.5" height="42" fill="#222"/>
<rect x="1054" y="794" width="8" height="1.5" fill="#222"/>
<rect x="1287" y="792" width="1.5" height="30" fill="#222"/>
<rect x="1287" y="848" width="1.5" height="30" fill="#222"/>

<!-- triad -->
<g>
<line x1="46" y1="1056" x2="46" y2="1030" stroke="#10d010" stroke-width="3"/>
<path d="M41,1034 L46,1026 L51,1034 Z" fill="#10d010"/>
<text x="43" y="1023" font-family="Liberation Sans" font-size="7" fill="#20c020">Y</text>
<line x1="47" y1="1056" x2="68" y2="1058" stroke="#e01010" stroke-width="3"/>
<path d="M66,1053 L74,1059 L66,1063 Z" fill="#e01010"/>
<text x="77" y="1061" font-family="Liberation Sans" font-size="6" fill="#a02020">x</text>
<line x1="47" y1="1056" x2="36" y2="1065" stroke="#1010e0" stroke-width="3.5"/>
<circle cx="37" cy="1064" r="3" fill="#1010e0"/>
</g>
<text x="21" y="1110" font-family="Liberation Sans" font-size="13.4" font-weight="bold" fill="#1a1a1a" stroke="#1a1a1a" stroke-width="0.3">*Dimetric</text>
</svg>

</body></html>
